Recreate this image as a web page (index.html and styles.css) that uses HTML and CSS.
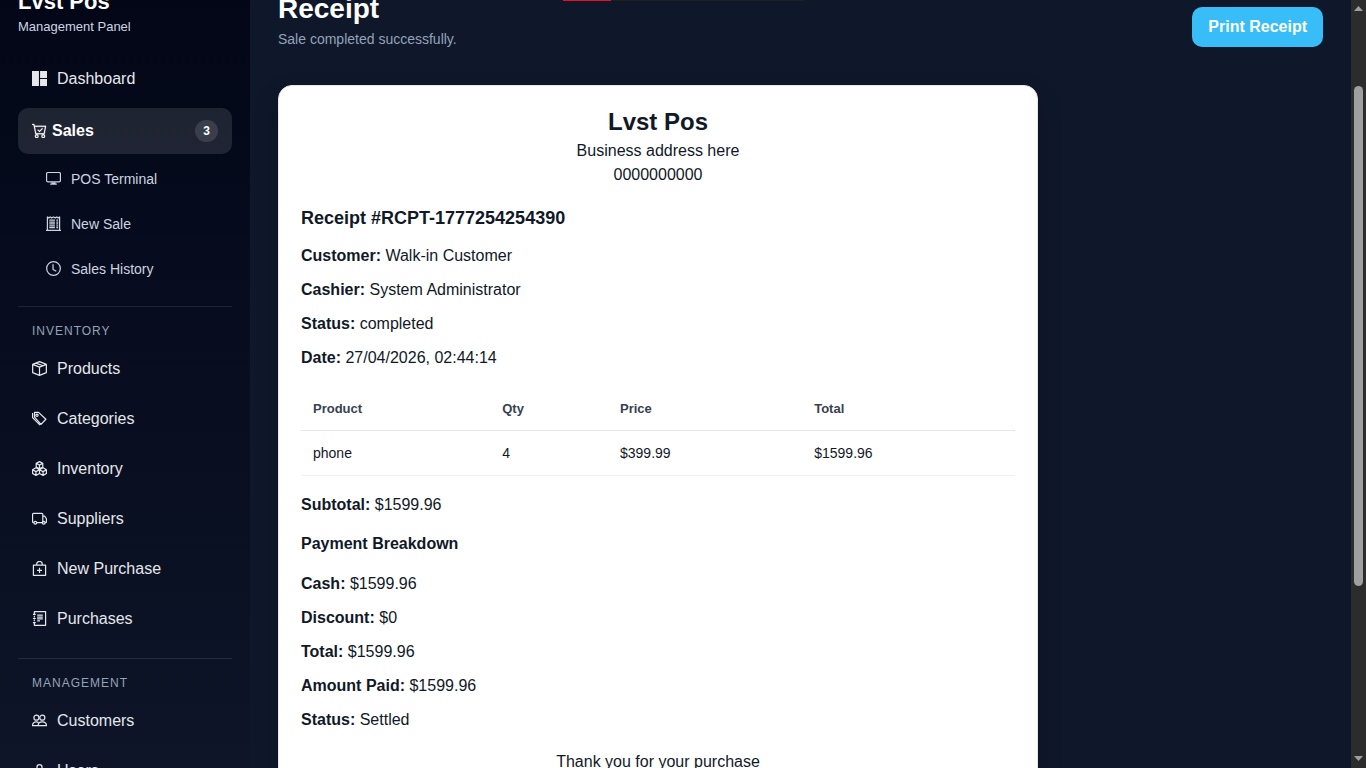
FILE: index.html
```html
<!DOCTYPE html>
<html lang="en">
<head>
    <meta charset="UTF-8">
    <meta name="viewport" content="width=device-width, initial-scale=1.0">
    <title>Lvst Pos - Receipt</title>
    <link rel="stylesheet" href="styles.css">
</head>
<body>
    <div class="layout">
        <aside class="sidebar">
            <h2 class="brand">Lvst Pos</h2>
            <p class="brand-sub">Management Panel</p>

            <nav class="menu">
                <a href="#" class="menu-link">
                    <svg class="icon" viewBox="0 0 16 16" fill="currentColor"><path d="M0 0h7.400v16H0zM8.600 0H16v7.400H8.600zM8.600 8.600H16V16H8.600z"/></svg>
                    Dashboard
                </a>

                <button type="button" class="menu-toggle">
                    <svg class="icon" viewBox="0 0 16 16" fill="currentColor" stroke="currentColor" stroke-width=".3"><path d="M11.354 6.354a.5.5 0 0 0-.708-.708L8 8.293 6.854 7.146a.5.5 0 1 0-.708.708l1.5 1.5a.5.5 0 0 0 .708 0z"/><path d="M.5 1a.5.5 0 0 0 0 1h1.11l.401 1.607 1.498 7.985A.5.5 0 0 0 4 12h1a2 2 0 1 0 0 4 2 2 0 0 0 0-4h7a2 2 0 1 0 0 4 2 2 0 0 0 0-4h1a.5.5 0 0 0 .491-.408l1.5-8A.5.5 0 0 0 14.5 3H2.89l-.405-1.621A.5.5 0 0 0 2 1zm3.915 10L3.102 4h10.796l-1.313 7zM6 14a1 1 0 1 1-2 0 1 1 0 0 1 2 0m7 0a1 1 0 1 1-2 0 1 1 0 0 1 2 0"/></svg>
                    Sales
                    <span class="count">3</span>
                </button>

                <div class="submenu">
                    <a href="#" class="submenu-link">
                        <svg class="icon line" viewBox="0 0 16 16"><rect x=".6" y="1.600" width="14.800" height="9.900" rx="1.500"/><path d="M6.500 12v2M9.500 12v2M4.500 14h7M7 13h2"/></svg>
                        POS Terminal
                    </a>
                    <a href="#" class="submenu-link">
                        <svg class="icon line" viewBox="0 0 16 16"><path d="M1.500 15V1l1.500 1 1.500-1L6 2l2-1 2 1 1.500-1L13 2l1.500-1v14M0 15.400h16M3.500 4.500h6M3.500 6.500h6M3.500 8.500h6M3.500 10.500h6M3.500 12.500h6M11 4.500h2M11 6.500h2M11 8.500h2M11 10.500h2M11 12.500h2"/></svg>
                        New Sale
                    </a>
                    <a href="#" class="submenu-link">
                        <svg class="icon line" viewBox="0 0 16 16"><circle cx="8" cy="8" r="7.300"/><path d="M7.500 3.500V9l3.500 2"/></svg>
                        Sales History
                    </a>
                </div>
            </nav>

            <nav class="menu menu-section">
                <h3 class="menu-title">INVENTORY</h3>
                <a href="#" class="menu-link">
                    <svg class="icon line" viewBox="0 0 16 16"><path d="M8 .7l7.300 2.900v8.800L8 15.300.7 12.400V3.600zM.7 3.600L8 6.500l7.300-2.900M8 6.500v8.800M4.200 2.200l7.500 2.900"/></svg>
                    Products
                </a>
                <a href="#" class="menu-link">
                    <svg class="icon line" viewBox="0 0 16 16"><path d="M2.700 1.500H7l7.800 7.300-5.200 5.400L2.700 6.500zM.6 2v5l8 8"/><circle cx="5.300" cy="4.500" r="1.200"/></svg>
                    Categories
                </a>
                <a href="#" class="menu-link">
                    <svg class="icon line" viewBox="0 0 16 16"><path d="M8 .7l3.500 1.800v4L8 8.300 4.500 6.500v-4zM4.500 2.500L8 4.300l3.500-1.800M8 4.300v4M4.200 7.200L8 9.300v4l-3.800 2-3.600-2v-4zM.6 9.300l3.600 2 3.800-2M4.200 11.300v4M11.800 7.200l3.600 2.100v4l-3.600 2-3.800-2M8 9.300l3.800-2.100M8 9.300l3.800 2 3.600-2M11.800 11.300v4"/></svg>
                    Inventory
                </a>
                <a href="#" class="menu-link">
                    <svg class="icon line" viewBox="0 0 16 16"><path d="M1.800 12.500H1.600a1 1 0 0 1-1-1v-8a1 1 0 0 1 1-1h8.900a1 1 0 0 1 1 1v9H5M11.500 5.500h2l1.900 2.800v3.200a1 1 0 0 1-1 1h-.6"/><circle cx="3.500" cy="12.500" r="1.500"/><circle cx="12.500" cy="12.500" r="1.500"/></svg>
                    Suppliers
                </a>
                <a href="#" class="menu-link">
                    <svg class="icon line" viewBox="0 0 16 16"><path d="M1.500 4.500h13v10.800h-13zM5 4.500v-1a3 3 0 0 1 6 0v1M8 7.300v5.400M5.300 10h5.400"/></svg>
                    New Purchase
                </a>
                <a href="#" class="menu-link">
                    <svg class="icon line" viewBox="0 0 16 16"><path d="M2.500 3V.7h12v14.600h-12V13M2.500 5v2M2.500 9v2M1 3.500h3M1 8h3M1 12.500h3M5.500 4.500h6M5.500 6.500h6M5.500 8.500h6M5.500 10.500h3"/></svg>
                    Purchases
                </a>
            </nav>

            <nav class="menu menu-section">
                <h3 class="menu-title">MANAGEMENT</h3>
                <a href="#" class="menu-link">
                    <svg class="icon line" viewBox="0 0 16 16"><circle cx="11" cy="5" r="2.700"/><circle cx="4.700" cy="5" r="2.700"/><path d="M6.500 13.500c0-2 1.500-4 4.500-4s4.400 2 4.400 4zM6 13.500H.6c0-2.500 1.500-4 4-4 1 0 1.700.2 2.300.5"/></svg>
                    Customers
                </a>
                <a href="#" class="menu-link">
                    <svg class="icon line" viewBox="0 0 16 16"><circle cx="8" cy="4.500" r="2.700"/><path d="M2.500 13.500c0-2 2-4 5.500-4s5.500 2 5.500 4z"/></svg>
                    Users
                </a>
            </nav>
        </aside>

        <main class="content">
            <header class="page-header">
                <div>
                    <h1>Receipt</h1>
                    <p>Sale completed successfully.</p>
                </div>
                <button type="button" class="btn-print">Print Receipt</button>
            </header>

            <section class="receipt">
                <div class="receipt-head">
                    <h2>Lvst Pos</h2>
                    <div>Business address here</div>
                    <div>0000000000</div>
                </div>

                <h3>Receipt #RCPT-1777254254390</h3>
                <p><strong>Customer:</strong> Walk-in Customer</p>
                <p><strong>Cashier:</strong> System Administrator</p>
                <p><strong>Status:</strong> completed</p>
                <p><strong>Date:</strong> 27/04/2026, 02:44:14</p>

                <table class="items">
                    <thead>
                        <tr>
                            <th class="col-product">Product</th>
                            <th class="col-qty">Qty</th>
                            <th class="col-price">Price</th>
                            <th>Total</th>
                        </tr>
                    </thead>
                    <tbody>
                        <tr>
                            <td>phone</td>
                            <td>4</td>
                            <td>$399.99</td>
                            <td>$1599.96</td>
                        </tr>
                    </tbody>
                </table>

                <p><strong>Subtotal:</strong> $1599.96</p>
                <h4>Payment Breakdown</h4>
                <p><strong>Cash:</strong> $1599.96</p>
                <p><strong>Discount:</strong> $0</p>
                <p><strong>Total:</strong> $1599.96</p>
                <p><strong>Amount Paid:</strong> $1599.96</p>
                <p><strong>Status:</strong> Settled</p>

                <div class="thanks">Thank you for your purchase</div>
            </section>
        </main>

        <div class="scrollbar">
            <svg class="arrow" viewBox="0 0 9 5"><path d="M0 5L4.500 0 9 5z"/></svg>
            <div class="track"><div class="thumb"></div></div>
            <svg class="arrow" viewBox="0 0 9 5"><path d="M0 0h9L4.500 5z"/></svg>
        </div>
    </div>

    <div class="progress"><div class="progress-value"></div></div>
</body>
</html>
```
FILE: styles.css
```css
* {
    box-sizing: border-box;
}

body {
    margin: 0;
    font-family: "Liberation Sans", Arial, sans-serif;
    font-size: 16px;
    line-height: 24px;
    background: #0f172a;
    color: #0f172a;
    overflow: hidden;
}

h1, h2, h3, h4, p {
    margin: 0;
}

.layout {
    display: flex;
    height: 100vh;
    overflow: hidden;
}

/* sidebar */
.sidebar {
    flex: 0 0 250px;
    align-self: flex-start;
    margin-top: -35px;
    padding: 24px 18px 100px;
    background: linear-gradient(180deg, #020617, #0f172a);
    color: #e5e7eb;
}

.brand {
    margin-bottom: 2px;
    font-size: 22px;
    line-height: 26px;
    color: #fff;
}

.brand-sub {
    margin-bottom: 19px;
    font-size: 13px;
    line-height: 20px;
    color: #cbd5e1;
}

.menu {
    display: flex;
    flex-direction: column;
    gap: 4px;
}

.menu-section {
    margin-top: 16px;
    border-top: 1px solid rgba(255, 255, 255, 0.1);
}

.menu-title {
    margin: 14px 14px 1px;
    font-size: 12px;
    font-weight: normal;
    line-height: 20px;
    letter-spacing: 1px;
    color: #94a3b8;
}

.menu-link {
    display: flex;
    align-items: center;
    gap: 10px;
    padding: 11px 14px;
    border-radius: 10px;
    color: #e5e7eb;
    text-decoration: none;
}

.menu-toggle {
    display: flex;
    align-items: center;
    gap: 5px;
    margin: 2px 0 1px;
    padding: 11px 14px;
    border: 0;
    border-radius: 10px;
    background: rgba(255, 255, 255, 0.11);
    color: #fff;
    font: inherit;
    font-weight: bold;
    cursor: pointer;
}

.count {
    margin-left: auto;
    padding: 0 8px;
    border-radius: 11px;
    background: rgba(255, 255, 255, 0.12);
    font-size: 12px;
    line-height: 22px;
}

.submenu {
    display: flex;
    flex-direction: column;
    gap: 4px;
    padding-left: 14px;
}

.submenu-link {
    display: flex;
    align-items: center;
    gap: 10px;
    padding: 10px 14px;
    font-size: 14px;
    line-height: 21px;
    color: #cbd5e1;
    text-decoration: none;
}

.icon {
    flex: none;
    width: 15px;
    height: 15px;
    margin-bottom: 2px;
}

.line {
    fill: none;
    stroke: currentColor;
    stroke-width: 1.3;
    stroke-linejoin: round;
}

/* main area */
.content {
    flex: 1;
    align-self: flex-start;
    margin-top: -36px;
    padding: 28px;
}

.page-header {
    display: flex;
    justify-content: space-between;
    align-items: center;
    margin-bottom: 23px;
}

.page-header h1 {
    margin-bottom: 2px;
    font-size: 28px;
    line-height: 34px;
    color: #fff;
}

.page-header p {
    margin-bottom: 12px;
    font-size: 14px;
    line-height: 22px;
    color: #94a3b8;
}

.btn-print {
    padding: 8px 16px;
    border: 0;
    border-radius: 10px;
    background: #38bdf8;
    color: #fff;
    font: inherit;
    font-weight: bold;
    cursor: pointer;
}

.receipt {
    max-width: 760px;
    padding: 22px;
    border: 1px solid #e5e7eb;
    border-radius: 14px;
    background: #fff;
    box-shadow: 0 10px 25px rgba(2, 6, 23, 0.2);
    color: #111827;
}

.receipt-head {
    margin-bottom: 18px;
    text-align: center;
}

.receipt-head h2 {
    margin-bottom: 3px;
    font-size: 24px;
    line-height: 28px;
}

.receipt h3 {
    margin-bottom: 12px;
    font-size: 18px;
    line-height: 27px;
}

.receipt h4 {
    margin: 15px 0 16px;
}

.receipt p + p {
    margin-top: 10px;
}

.items {
    width: 100%;
    margin: 16px 0 17px;
    border-collapse: collapse;
    table-layout: fixed;
}

.items th,
.items td {
    padding: 12px;
    text-align: left;
    line-height: 20px;
}

.items th {
    padding: 13px 12px 11px;
    border-bottom: 1px solid #e5e7eb;
    font-size: 13px;
    color: #374151;
}

.items td {
    border-bottom: 1px solid #f1f1f4;
    font-size: 14px;
}

.col-product {
    width: 26.5%;
}

.col-qty {
    width: 16.5%;
}

.col-price {
    width: 27.2%;
}

.thanks {
    margin-top: 18px;
    text-align: center;
}

/* window scrollbar */
.scrollbar {
    flex: 0 0 15px;
    display: flex;
    flex-direction: column;
    align-items: center;
    padding: 6px 0 7px;
    background: #2c2c2c;
}

.arrow {
    width: 9px;
    height: 5px;
    fill: #9f9f9f;
}

.track {
    flex: 1;
    width: 9px;
    padding: 75px 0;
}

.thumb {
    height: 84%;
    border-radius: 5px;
    background: #9f9f9f;
}

/* thin loading line on top of the page */
.progress {
    position: absolute;
    top: 0;
    left: 50%;
    width: 241px;
    height: 1px;
    margin-left: -120px;
    background: #1f1f1f;
}

.progress-value {
    width: 20%;
    height: 1px;
    background: #e81123;
}
```
